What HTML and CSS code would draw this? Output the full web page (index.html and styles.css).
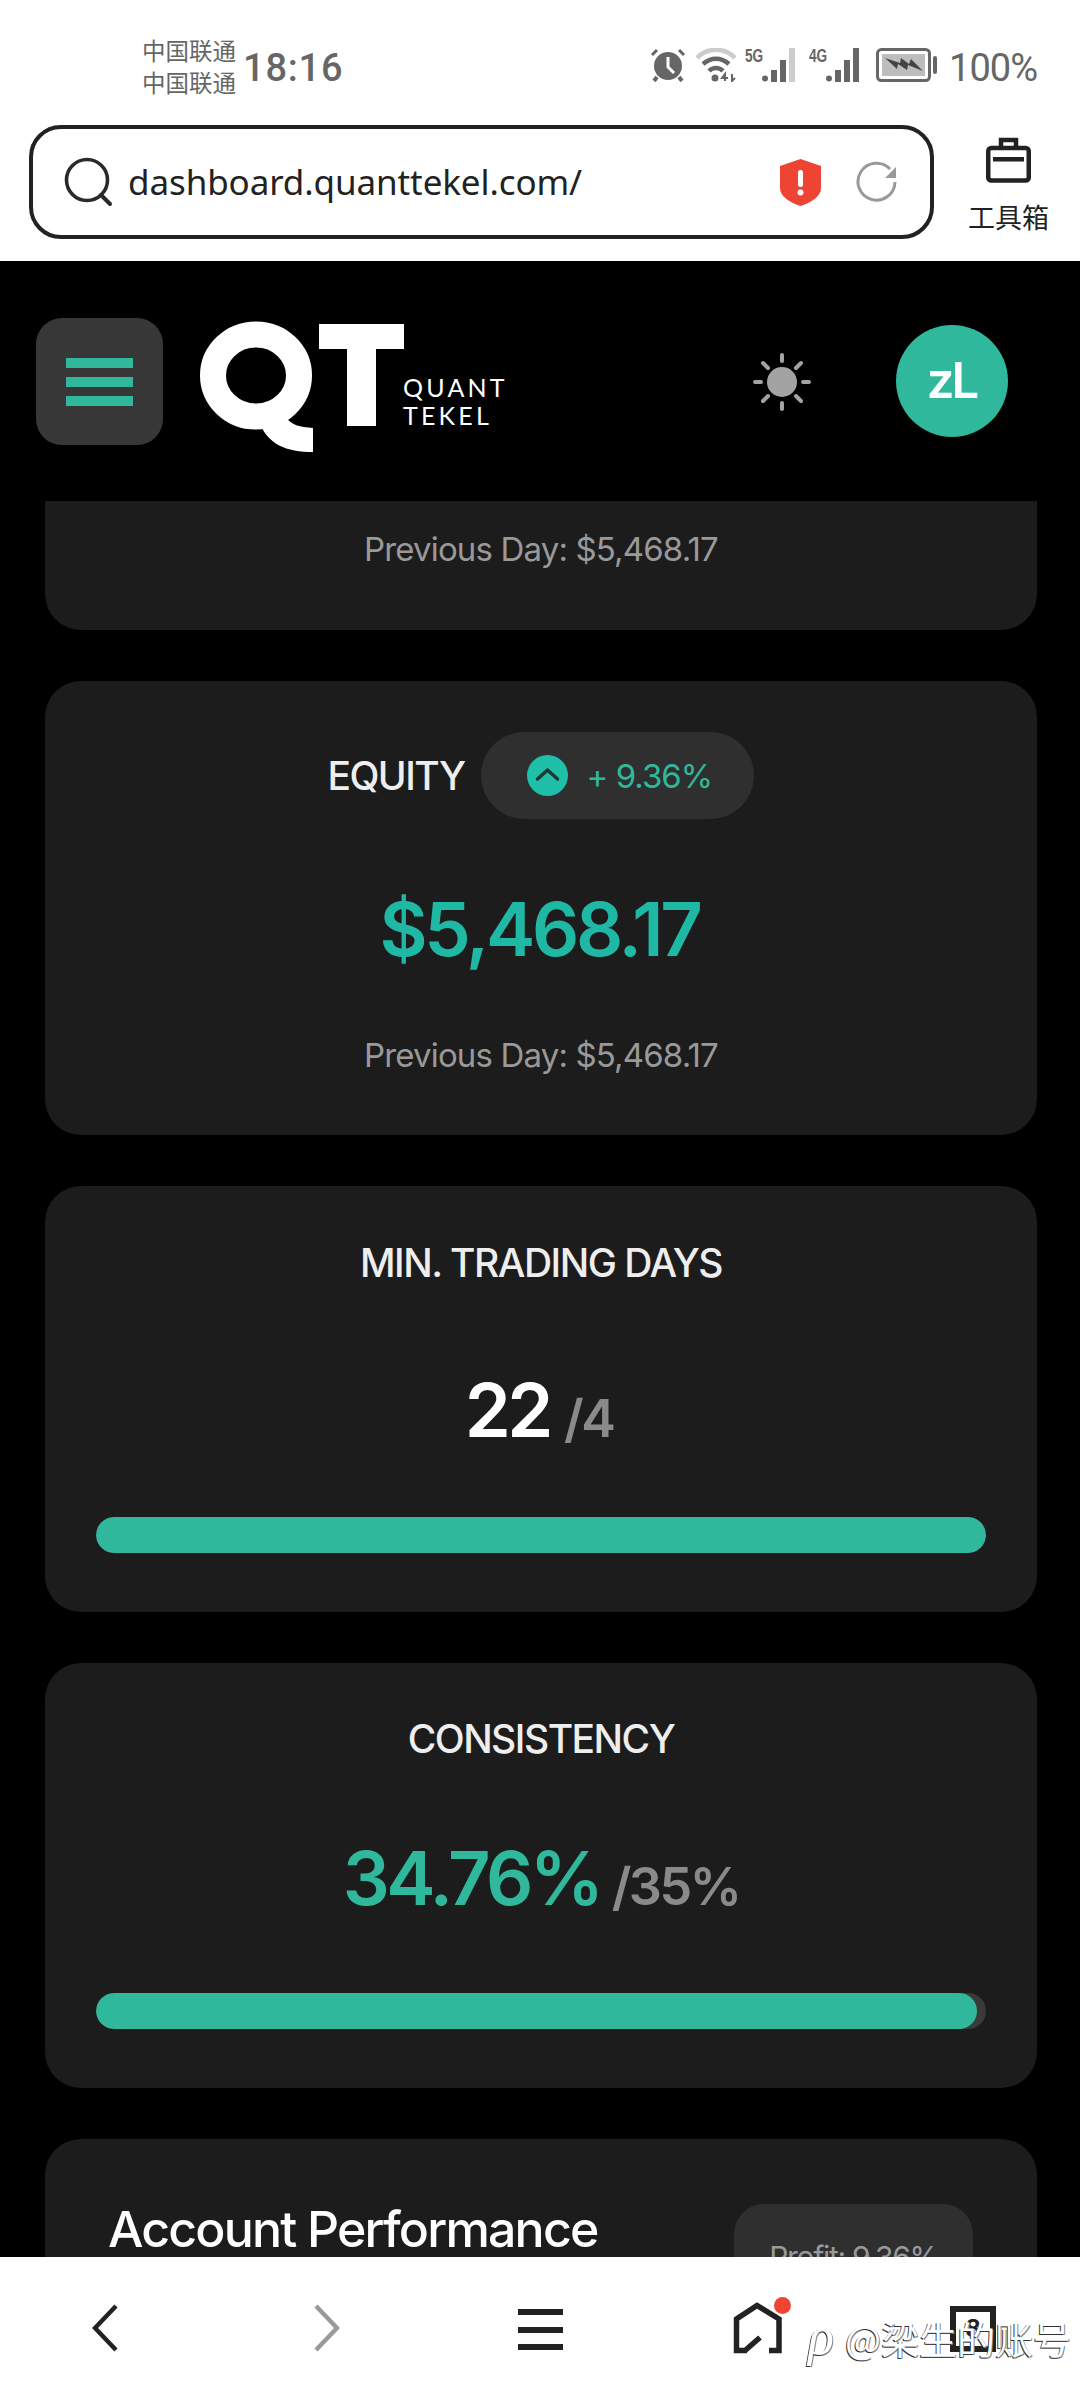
FILE: index.html
```html
<!DOCTYPE html>
<html lang="zh">
<head>
<meta charset="utf-8">
<title>Quant Tekel Dashboard</title>
<link rel="stylesheet" href="styles.css">
</head>
<body>
<div class="screen">
  <div class="chrome">
    <div class="status">
      <div class="carriers"><span>中国联通</span><span>中国联通</span></div>
      <span class="time">18:16</span>
      <div class="status-right">
        <svg class="ic-alarm" viewBox="0 0 36 34"><circle cx="18" cy="18" r="14" fill="#666"/><path d="M18 9v10l6 6" fill="none" stroke="#fff" stroke-width="3"/><path d="M2 7l5-5M34 7l-5-5" stroke="#666" stroke-width="3" fill="none"/><path d="M7 29l-3 4M29 29l3 4" stroke="#666" stroke-width="4" fill="none"/></svg>
        <svg class="ic-wifi" viewBox="0 0 40 34"><path d="M1 10C11 -1 29 -1 39 10" stroke="#ccc" stroke-width="4.500" fill="none"/><path d="M7 16c8-7 18-7 26 0" stroke="#666" stroke-width="4.500" fill="none"/><path d="M13 23c4-4 10-4 14 0" stroke="#666" stroke-width="4.500" fill="none"/><circle cx="19" cy="30" r="3.500" fill="#666"/><path d="M29 33v-7l-3 4h6M36 26v7l3-3" stroke="#666" stroke-width="2" fill="none"/></svg>
        <span class="net"><b>5G</b><svg viewBox="0 0 35 34"><circle cx="3" cy="30.500" r="3" fill="#666"/><rect x="9" y="22" width="6" height="12" fill="#666"/><rect x="18" y="12" width="6" height="22" fill="#666"/><rect x="27" y="0" width="6" height="34" fill="#ccc"/></svg></span>
        <span class="net"><b>4G</b><svg viewBox="0 0 35 34"><circle cx="3" cy="30.500" r="3" fill="#666"/><rect x="9" y="22" width="6" height="12" fill="#666"/><rect x="18" y="12" width="6" height="22" fill="#666"/><rect x="27" y="0" width="6" height="34" fill="#666"/></svg></span>
        <svg class="ic-batt" viewBox="0 0 62 34"><rect x="1.500" y="1.500" width="52" height="31" rx="4" fill="#fff" stroke="#666" stroke-width="3"/><rect x="6" y="6" width="43" height="22" fill="#bdbdbd"/><path d="M9 10l15 5 1-5 8 6 2-5 12 12-15-6-1 5-9-6-1 5z" fill="#444"/><rect x="57" y="8" width="4" height="18" rx="2" fill="#666"/></svg>
        <span class="batt-pct">100%</span>
      </div>
    </div>
    <div class="browser">
      <div class="urlbar">
        <svg class="ic-search" viewBox="0 0 50 50"><circle cx="23" cy="23" r="20.500" fill="none" stroke="#2a2a2a" stroke-width="3.600"/><path d="M37 38l9 9" stroke="#2a2a2a" stroke-width="4" stroke-linecap="round"/></svg>
        <span class="url">dashboard.quanttekel.com/</span>
        <svg class="ic-shield" viewBox="0 0 41 47"><path d="M20.500 0l20.500 7v22c0 9-11 15-20.500 18C11 44 0 38 0 29V7z" fill="#ee4433"/><rect x="18" y="11" width="5" height="17" rx="2.500" fill="#fff"/><circle cx="20.500" cy="33.500" r="3" fill="#fff"/></svg>
        <svg class="ic-reload" viewBox="0 0 42 42"><path d="M39 21a18.500 18.500 0 1 1-5-13" fill="none" stroke="#999" stroke-width="3"/><path d="M40 6v11H29z" fill="#999"/></svg>
      </div>
      <div class="toolbox">
        <svg viewBox="0 0 45 46"><path d="M15 10V3h15v7" fill="none" stroke="#222" stroke-width="4.500"/><rect x="2.250" y="11" width="40.500" height="32.500" rx="3" fill="none" stroke="#222" stroke-width="4.500"/><rect x="7" y="20" width="31" height="4.500" fill="#222"/></svg>
        <span>工具箱</span>
      </div>
    </div>
  </div>

  <header class="topbar">
    <button class="menu-btn" aria-label="menu"><i></i><i></i><i></i></button>
    <div class="logo">
      <svg class="logo-mark" viewBox="0 0 205 132" role="img" aria-label="QT">
        <ellipse cx="57" cy="54.500" rx="43" ry="41" fill="none" stroke="#fff" stroke-width="26"/>
        <path d="M60 100c7 20 22 30 50 31h4v-24c-14-1-20-3-26-9z" fill="#fff"/>
        <path d="M120 3h85v25h-28v77h-29V28h-28z" fill="#fff"/>
      </svg>
      <div class="logo-text"><span>QUANT</span><span>TEKEL</span></div>
    </div>
    <svg class="sun" viewBox="0 0 58 58"><circle cx="29" cy="29" r="15" fill="#a3a3a3"/><g stroke="#a3a3a3" stroke-width="4" stroke-linecap="round"><path d="M29 2v6M29 50v6M2 29h6M50 29h6M10 10l5 5M43 43l5 5M10 48l5-5M43 15l5-5"/></g></svg>
    <div class="avatar">zL</div>
  </header>

  <main class="content">
    <section class="card card-clip"><p class="prev">Previous Day: $5,468.17</p></section>

    <section class="card card-equity">
      <div class="equity-head">
        <h2 class="card-title">EQUITY</h2>
        <div class="change"><svg viewBox="0 0 41 41"><circle cx="20.500" cy="20.500" r="20.500" fill="#1fbfa9"/><path d="M10.500 24l10-9 10 9" fill="none" stroke="#1c3a38" stroke-width="3.500" stroke-linecap="round"/></svg><span>+ 9.36%</span></div>
      </div>
      <div class="amount">$5,468.17</div>
      <p class="prev prev-equity">Previous Day: $5,468.17</p>
    </section>

    <section class="card card-days">
      <h2 class="card-title">MIN. TRADING DAYS</h2>
      <div class="metric metric-days"><strong>22</strong><span>/4</span></div>
      <div class="track"><div class="fill" style="width:100%"></div></div>
    </section>

    <section class="card card-cons">
      <h2 class="card-title">CONSISTENCY</h2>
      <div class="metric metric-cons"><strong>34.76%</strong><span>/35%</span></div>
      <div class="track"><div class="fill" style="width:99%"></div></div>
    </section>

    <section class="card card-perf">
      <h2 class="perf-title">Account Performance</h2>
      <div class="profit">Profit: 9.36%</div>
    </section>
  </main>

  <nav class="bottom">
    <svg class="nav-chev" viewBox="0 0 26 48"><path d="M24 2L3 24l21 22" fill="none" stroke="#222" stroke-width="4.500"/></svg>
    <svg class="nav-chev" viewBox="0 0 26 48"><path d="M2 2l21 22L2 46" fill="none" stroke="#999" stroke-width="4.500"/></svg>
    <div class="nav-menu"><i></i><i></i><i></i></div>
    <div class="nav-home">
      <svg viewBox="0 0 50 52"><path d="M14 48.500H3.500V17L24 3.500 46 17v31.500H36M12 48.500l15-13" fill="none" stroke="#222" stroke-width="5.500"/></svg>
      <b class="dot"></b>
    </div>
    <div class="nav-tabs">8</div>
  </nav>
  <div class="watermark"><span class="wm-mark">ρ</span>@梁生的账号</div>
</div>
</body>
</html>
```
FILE: styles.css
```css
*{box-sizing:border-box}
html,body{margin:0;padding:0}
body{width:1080px;height:2400px;overflow:hidden;background:#000;font-family:Inter,"Noto Sans CJK SC",sans-serif}
.screen{position:relative;width:1080px;height:2400px;display:flex;flex-direction:column}
.chrome{height:261px;background:#fff;flex:none}
.status{height:125px;display:flex;align-items:flex-start;padding:34px 43px 0 142px;color:#666}
.carriers{display:flex;flex-direction:column;font:23.500px/32px "Noto Sans CJK SC",sans-serif;width:94px;color:#666;white-space:nowrap}
.time{font:500 38px/56px Roboto,sans-serif;margin:6px 0 0 7px;letter-spacing:.8px;color:#666}
.status-right{margin-left:auto;display:flex;align-items:flex-start;height:60px;padding-top:14px}
.ic-alarm{width:36px;height:34px;margin-top:0}
.ic-wifi{width:40px;height:34px;margin:0 0 0 10px}
.net{display:flex;align-items:flex-start;margin-left:9px;width:52px;height:36px}
.net b{font:700 19px/16px "Liberation Sans",sans-serif;transform:scaleX(.72);transform-origin:0 0;width:17px;flex:none}
.net svg{width:35px;height:34px;flex:none}
.net + .net{margin-left:12px}
.ic-batt{width:62px;height:34px;margin:0 0 0 15px}
.batt-pct{font:400 38px/44px Roboto,sans-serif;margin:-2px 0 0 11px;letter-spacing:-1px;color:#666}
.browser{height:136px;display:flex;align-items:flex-start;padding-left:29px}
.urlbar{width:905px;height:114px;border:4px solid #222;border-radius:32px;display:flex;align-items:center;padding-left:31px;background:#fff}
.ic-search{width:50px;height:50px;flex:none}
.url{font:400 35px/50px "Noto Sans",sans-serif;color:#222;margin-left:14px;letter-spacing:-.1px;white-space:nowrap;width:652px;flex:none}
.ic-shield{width:41px;height:47px;flex:none}
.ic-reload{width:42px;height:42px;flex:none;margin-left:35px}
.toolbox{display:flex;flex-direction:column;align-items:center;width:81px;margin:12px 0 0 34px}
.toolbox svg{width:45px;height:46px}
.toolbox span{font:27px/32px "Noto Sans CJK SC",sans-serif;color:#222;margin-top:18px;white-space:nowrap}
.topbar{height:240px;flex:none;background:#000;display:flex;align-items:flex-start;padding:57px 72.500px 0 36px;position:relative}
.menu-btn{width:127px;height:127px;background:#373737;border:0;border-radius:26px;display:flex;flex-direction:column;justify-content:center;align-items:center;gap:9px;padding:0}
.menu-btn i{display:block;width:67px;height:10px;background:#2fb89b}
.logo{display:flex;margin-left:36px;align-items:flex-start;margin-top:3px}
.logo-mark{width:205px;height:132px;flex:none}
.logo-text{display:flex;flex-direction:column;color:#fff;font:400 25px/27.500px Lato,sans-serif;letter-spacing:3.200px;margin:53px 0 0 -1px}
.sun{width:58px;height:58px;margin:35px 0 0 auto}
.avatar{width:112px;height:112px;border-radius:50%;background:#2fb89b;color:#fff;font:600 49px/112px Inter,sans-serif;text-align:center;margin:7px 0 0 85px;letter-spacing:-3px}
.content{flex:1;min-height:0;overflow:hidden;display:flex;flex-direction:column;gap:51px;padding:0 43px 0 45px;background:#000}
.card{background:#1c1c1c;border-radius:36px;flex:none;text-align:center}
.card-clip{height:129px;border-radius:0 0 36px 36px;padding-top:28px}
.prev{margin:0;font:400 33px/40px Inter,sans-serif;letter-spacing:-.85px;color:#999}
.card-title{margin:0;font:500 39px/48px Inter,sans-serif;letter-spacing:-1.500px;color:#eee}
.card-equity{height:454px;padding-top:51px}
.equity-head{display:flex;justify-content:center;align-items:center;gap:16px;padding-right:1px}
.change{height:87px;width:273px;border-radius:43.500px;background:#2f2f2f;display:flex;align-items:center;padding-left:46px;gap:19px;color:#2fb89b;font:400 33px/40px Inter,sans-serif;letter-spacing:-1px}
.change svg{width:41px;height:41px;flex:none}
.amount{font:600 74px/90px Inter,sans-serif;letter-spacing:-3.300px;color:#1fb8a5;margin:65px 3px 0 0}
.prev-equity{margin-top:61px}
.card-days{height:426px;padding-top:53px}
.card-cons{height:425px;padding-top:52px}
.metric{display:flex;justify-content:center;align-items:baseline;height:90px;line-height:90px;gap:10px}
.metric strong{font:600 74px/90px Inter,sans-serif;letter-spacing:-3.500px}
.metric span{font:600 52px/90px Inter,sans-serif;letter-spacing:-2.500px;color:#8a8a8a}
.metric-days{margin-top:78px;gap:14px;padding-right:4px}
.metric-days strong{color:#fff}
.metric-cons{margin-top:70px;gap:11px}
.metric-cons strong{color:#2fb89b}
.track{height:36px;margin:62px 51px 0;border-radius:18px;background:#3a3a3a;overflow:hidden}
.metric-cons + .track{margin-top:70px}
.fill{height:100%;background:#2fb89b;border-radius:18px}
.card-perf{height:300px;display:flex;justify-content:space-between;align-items:flex-start;padding:65px 64px 0 63px;text-align:left}
.perf-title{margin:0;font:500 50px/50px Inter,sans-serif;letter-spacing:-1.800px;color:#fff}
.profit{width:239px;height:110px;border-radius:30px;background:#2f2f2f;color:#999;font:400 30px/40px Inter,sans-serif;letter-spacing:-1.300px;text-align:center;padding-top:33px}
.bottom{height:143px;flex:none;background:#fff;display:flex;align-items:flex-start;position:relative;padding:47px 0 0 92px}
.nav-chev{width:26px;height:48px;flex:none}
.nav-chev + .nav-chev{margin-left:196px}
.nav-menu{width:45px;height:41px;margin:5px 0 0 178px;display:flex;flex-direction:column;justify-content:space-between}
.nav-menu i{display:block;height:6px;background:#222}
.nav-home{position:relative;width:50px;height:52px;margin:-2px 0 0 170px}
.nav-home svg{width:50px;height:52px}
.dot{position:absolute;top:-5.500px;right:-7.500px;width:17px;height:17px;border-radius:50%;background:#ee4433}
.nav-tabs{width:46px;height:46px;border:6px solid #222;margin:2px 0 0 167px;font:700 24px/34px Inter,sans-serif;color:#222;text-align:center}
.watermark{position:absolute;left:808px;top:2311px;font:400 38px/50px "Noto Sans CJK SC",sans-serif;color:#fff;text-shadow:-1px 1px 0 #333,1px 1px 0 #888;white-space:nowrap}
.wm-mark{display:inline-block;width:37px;font:italic 54px/50px "Liberation Serif",serif}
```
